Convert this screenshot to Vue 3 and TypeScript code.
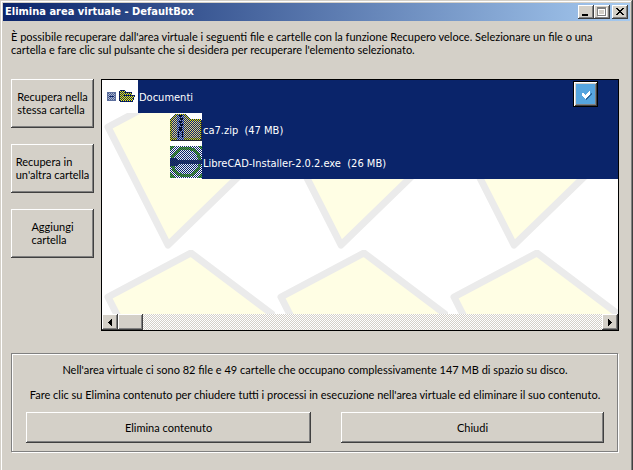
<script setup lang="ts">
import { ref } from 'vue'

interface RecoverableFile {
  name: string
  size: string
  icon: 'zip' | 'installer'
}

const boxName = 'DefaultBox'
const folder = 'Documenti'
const files: RecoverableFile[] = [
  { name: 'ca7.zip', size: '47 MB', icon: 'zip' },
  { name: 'LibreCAD-Installer-2.0.2.exe', size: '26 MB', icon: 'installer' },
]
const expanded = ref(true)
</script>

<template>
  <main class="window">
    <header class="titlebar">
      <h1 class="title">Elimina area virtuale - {{ boxName }}</h1>
      <button class="bevel caption" type="button" aria-label="Riduci a icona">
        <svg viewBox="0 0 12 10"><path d="M2 7h6v2H2z" fill="#000" /></svg>
      </button>
      <button class="bevel caption" type="button" aria-label="Ingrandisci" disabled>
        <svg viewBox="0 0 12 10">
          <path d="M2 1h9v9H2z" fill="#fff" />
          <path d="M1 0h9v9H1zM2 2v6h7V2z" fill="#808080" fill-rule="evenodd" />
          <path d="M3 3h5v4H3z" fill="#d4d0c8" />
        </svg>
      </button>
      <button class="bevel caption close" type="button" aria-label="Chiudi finestra">
        <svg viewBox="0 0 12 10">
          <path d="M2 1h2v1h1v1h2v-1h1v-1h2v1h-1v1h-1v1h-1v1h1v1h1v1h1v1h-2v-1h-1v-1h-2v1h-1v1h-2v-1h1v-1h1v-1h1v-1h-1v-1h-1v-1h-1z" fill="#000" />
        </svg>
      </button>
    </header>

    <p class="intro">
      È possibile recuperare dall'area virtuale i seguenti file e cartelle con la funzione Recupero veloce. Selezionare un file o una<br />
      cartella e fare clic sul pulsante che si desidera per recuperare l'elemento selezionato.
    </p>

    <section class="content">
      <nav class="actions">
        <button class="bevel action" type="button"><span>Recupera nella<br />stessa cartella</span></button>
        <button class="bevel action" type="button"><span>Recupera in<br />un'altra cartella</span></button>
        <button class="bevel action" type="button"><span>Aggiungi<br />cartella</span></button>
      </nav>

      <div class="list">
        <div class="view">
          <svg class="backdrop" aria-hidden="true">
            <defs>
              <pattern id="tile" width="173" height="170" patternUnits="userSpaceOnUse">
                <path d="M6 47L89 3L170 64L66 165Z" fill="#fffee4" stroke="#ebebeb" stroke-width="7" stroke-linejoin="round" />
              </pattern>
              <pattern id="dither" width="2" height="2" patternUnits="userSpaceOnUse">
                <path d="M0 0h1v1H0zM1 1h1v1H1z" fill="#0a246a" />
              </pattern>
              <pattern id="dither-odd" width="2" height="2" patternUnits="userSpaceOnUse">
                <path d="M1 0h1v1H1zM0 1h1v1H0z" fill="#0a246a" />
              </pattern>
            </defs>
            <rect width="100%" height="100%" fill="url(#tile)" />
          </svg>

          <ul class="tree">
            <li class="row root">
              <div class="glyphs">
                <button class="toggle" type="button" :aria-expanded="expanded" aria-label="Documenti" @click="expanded = !expanded">
                  <svg width="9" height="9" viewBox="0 0 9 9">
                    <path d="M0 0h9v9H0z" fill="#a9b4cc" />
                    <path d="M0 0h9v9H0z" fill="url(#dither)" opacity=".6" />
                    <path d="M0 0h9v9H0zM1 1v7h7V1z" fill="#5d709e" fill-rule="evenodd" />
                    <path d="M2 4h5v1H2z" fill="#0a246a" />
                  </svg>
                </button>
                <svg width="16" height="13" viewBox="0 0 16 13">
                  <path d="M0 1h1V0h5v1h1v1h6v3h3v1l-2 6H1L0 11z" fill="#0a1a4a" />
                  <path d="M1 1h5v2h7v2H4L2 11H1z" fill="#f4f000" />
                  <path d="M4 6h11l-2 5H2z" fill="#fff800" />
                  <path d="M0 1h1V0h5v1h1v1h6v3h3v1l-2 6H1L0 11z" fill="url(#dither-odd)" />
                </svg>
              </div>
              <span class="label">{{ folder }}</span>
            </li>
            <template v-if="expanded">
              <li v-for="file in files" :key="file.name" class="row child">
                <svg v-if="file.icon === 'zip'" class="icon" width="32" height="33" viewBox="0 0 32 33">
                  <path d="M0 0h32v33H0z" fill="#fff" />
                  <path d="M0 6L5 1h10l5 5h11l1 2v20H0z" fill="#e6e000" />
                  <path d="M2 7L6 3h8l5 5h11v17H2z" fill="#e4d27c" />
                  <path d="M7 2h7v25H7z" fill="#8f9fd0" />
                  <path d="M0 6L5 1h10l5 5h11l1 2v20H0z" fill="url(#dither)" />
                  <path d="M9 2h3v2H9zM10 5h3v2h-3zM9 8h3v2H9zM10 11h3v2h-3zM9 14h3v4H9zM8 18h1v6H8zM12 18h1v6h-1z" fill="#06102e" />
                  <path d="M0 26h1v1h30V8h1v19l-1 1H1l-1-1z" fill="#252a35" />
                </svg>
                <svg v-else class="icon" width="32" height="33" viewBox="0 0 32 33">
                  <path d="M0 0h32v33H0z" fill="#fff" />
                  <path d="M0 0h5L0 5zM27 0h5v5zM0 27l5 5H0zM32 27v5h-5z" fill="#63d014" />
                  <circle cx="16" cy="16" r="14" fill="#e4ecf4" stroke="#5fc512" stroke-width="3" />
                  <path d="M0 0h32v32H0z" fill="url(#dither)" />
                  <path d="M0 12h6l2 2h24v4H8l-2 2H0z" fill="#26375f" />
                  <path d="M0 12h6l2 2h24v4H8l-2 2H0z" fill="url(#dither)" />
                </svg>
                <span class="label">{{ file.name }}&nbsp; ({{ file.size }})</span>
              </li>
            </template>
          </ul>

          <button class="confirm" type="button" aria-label="Conferma">
            <svg width="17" height="19" viewBox="0 0 17 19">
              <path d="M6 9l3 4 6-6v2l-6 6-3-3z" fill="#2d699f" />
              <path d="M5 8h2l1 2 4-4h1v3l-5 5-3-3z" fill="#fff" />
            </svg>
          </button>
        </div>

        <div class="scrollbar">
          <button class="bevel step" type="button" aria-label="Scorri a sinistra">
            <svg width="4" height="7" viewBox="0 0 4 7"><path d="M4 0v7h-1v-1h-1v-1h-1v-1h-1v-1h1v-1h1v-1h1v-1z" fill="#000" /></svg>
          </button>
          <div class="bevel thumb"></div>
          <div class="track"></div>
          <button class="bevel step" type="button" aria-label="Scorri a destra">
            <svg width="4" height="7" viewBox="0 0 4 7"><path d="M0 0v7h1v-1h1v-1h1v-1h1v-1h-1v-1h-1v-1h-1v-1z" fill="#000" /></svg>
          </button>
        </div>
      </div>
    </section>

    <section class="summary">
      <p>Nell'area virtuale ci sono 82 file e 49 cartelle che occupano complessivamente 147 MB di spazio su disco.</p>
      <p>Fare clic su Elimina contenuto per chiudere tutti i processi in esecuzione nell'area virtuale ed eliminare il suo contenuto.</p>
      <div class="commands">
        <button class="bevel" type="button">Elimina contenuto</button>
        <button class="bevel" type="button">Chiudi</button>
      </div>
    </section>
  </main>
</template>

<style>
body {
  margin: 0;
  background: #d4d0c8;
}
</style>

<style scoped>
* {
  box-sizing: border-box;
}

.window {
  display: flex;
  flex-direction: column;
  min-height: 100vh;
  padding: 3px 3px 18px;
  background: #d4d0c8;
  box-shadow: inset -1px 0 #404040, inset 1px 1px #d4d0c8, inset -2px 0 #808080, inset 2px 2px #fff;
  color: #000;
  font: 11px/13px Lato, "Liberation Sans", sans-serif;
}

svg {
  display: block;
  shape-rendering: crispEdges;
}

h1,
p,
ul {
  margin: 0;
  padding: 0;
}

button {
  margin: 0;
  padding: 0;
  color: inherit;
  font: inherit;
}

.bevel {
  border: 0;
  background: #d4d0c8;
  box-shadow: inset -1px -1px #404040, inset 1px 1px #fff, inset -2px -2px #808080;
}

.titlebar {
  display: flex;
  align-items: center;
  height: 18px;
  padding: 0 2px;
  background: linear-gradient(to right, #0a246a, #a6caf0);
}

.title {
  flex: 1;
  color: #fff;
  font: bold 11px/18px "DejaVu Sans Condensed", "DejaVu Sans", Tahoma, sans-serif;
}

.caption {
  width: 16px;
  height: 14px;
  padding: 2px;
}

.close {
  margin-left: 2px;
}

.intro {
  padding: 9px 8px 23px;
}

.content {
  display: flex;
  flex: 1;
  gap: 7px;
  padding: 0 11px 0 8px;
}

.actions {
  display: flex;
  flex-direction: column;
  gap: 16px;
}

.action {
  display: flex;
  align-items: center;
  justify-content: center;
  width: 83px;
  height: 49px;
  padding-bottom: 2px;
  text-align: left;
  white-space: nowrap;
}

.list {
  display: flex;
  flex: 1;
  flex-direction: column;
  min-width: 0;
  border: 1px solid #000;
  background: #fff;
}

.view {
  position: relative;
  flex: 1;
  overflow: hidden;
}

.backdrop {
  position: absolute;
  inset: 0;
  width: 100%;
  height: 100%;
  shape-rendering: auto;
}

.tree {
  position: relative;
  list-style: none;
  color: #fff;
  font: 11px/33px "DejaVu Sans Condensed", "DejaVu Sans", Tahoma, sans-serif;
}

.row {
  display: flex;
  height: 33px;
}

.child {
  padding-left: 68px;
}

.glyphs {
  display: flex;
  align-items: center;
  gap: 3px;
  width: 36px;
  padding-left: 5px;
  background: #fff;
}

.toggle {
  border: 0;
  background: none;
}

.label {
  flex: 1;
  padding: 1px 0 0 1px;
  background: #0a246a;
  white-space: nowrap;
}

.confirm {
  position: absolute;
  top: 1px;
  right: 20px;
  width: 25px;
  height: 26px;
  padding: 2px 3px;
  border: 1px solid #000;
  background: #56a5df;
  box-shadow: inset 1px 1px #fff, inset -1px -1px #404040, inset 2px 2px #d4d0c8, inset -2px -2px #808080;
}

.scrollbar {
  display: flex;
  height: 16px;
}

.step {
  display: flex;
  align-items: center;
  justify-content: center;
  width: 16px;
}

.thumb {
  width: 25px;
}

.track {
  flex: 1;
  background: repeating-conic-gradient(#fff 0 25%, #d4d0c8 0 50%) 0 0 / 2px 2px;
}

.summary {
  margin: 22px 12px 0 8px;
  padding: 9px 13px 8px 14px;
  border: 1px solid #808080;
  box-shadow: inset 1px 1px #fff, 1px 1px #fff;
  text-align: center;
}

.summary p + p {
  margin-top: 12px;
}

.commands {
  display: flex;
  gap: 30px;
  margin-top: 11px;
}

.commands button {
  flex: 285;
  height: 31px;
}

.commands button:last-child {
  flex: 263;
}
</style>
